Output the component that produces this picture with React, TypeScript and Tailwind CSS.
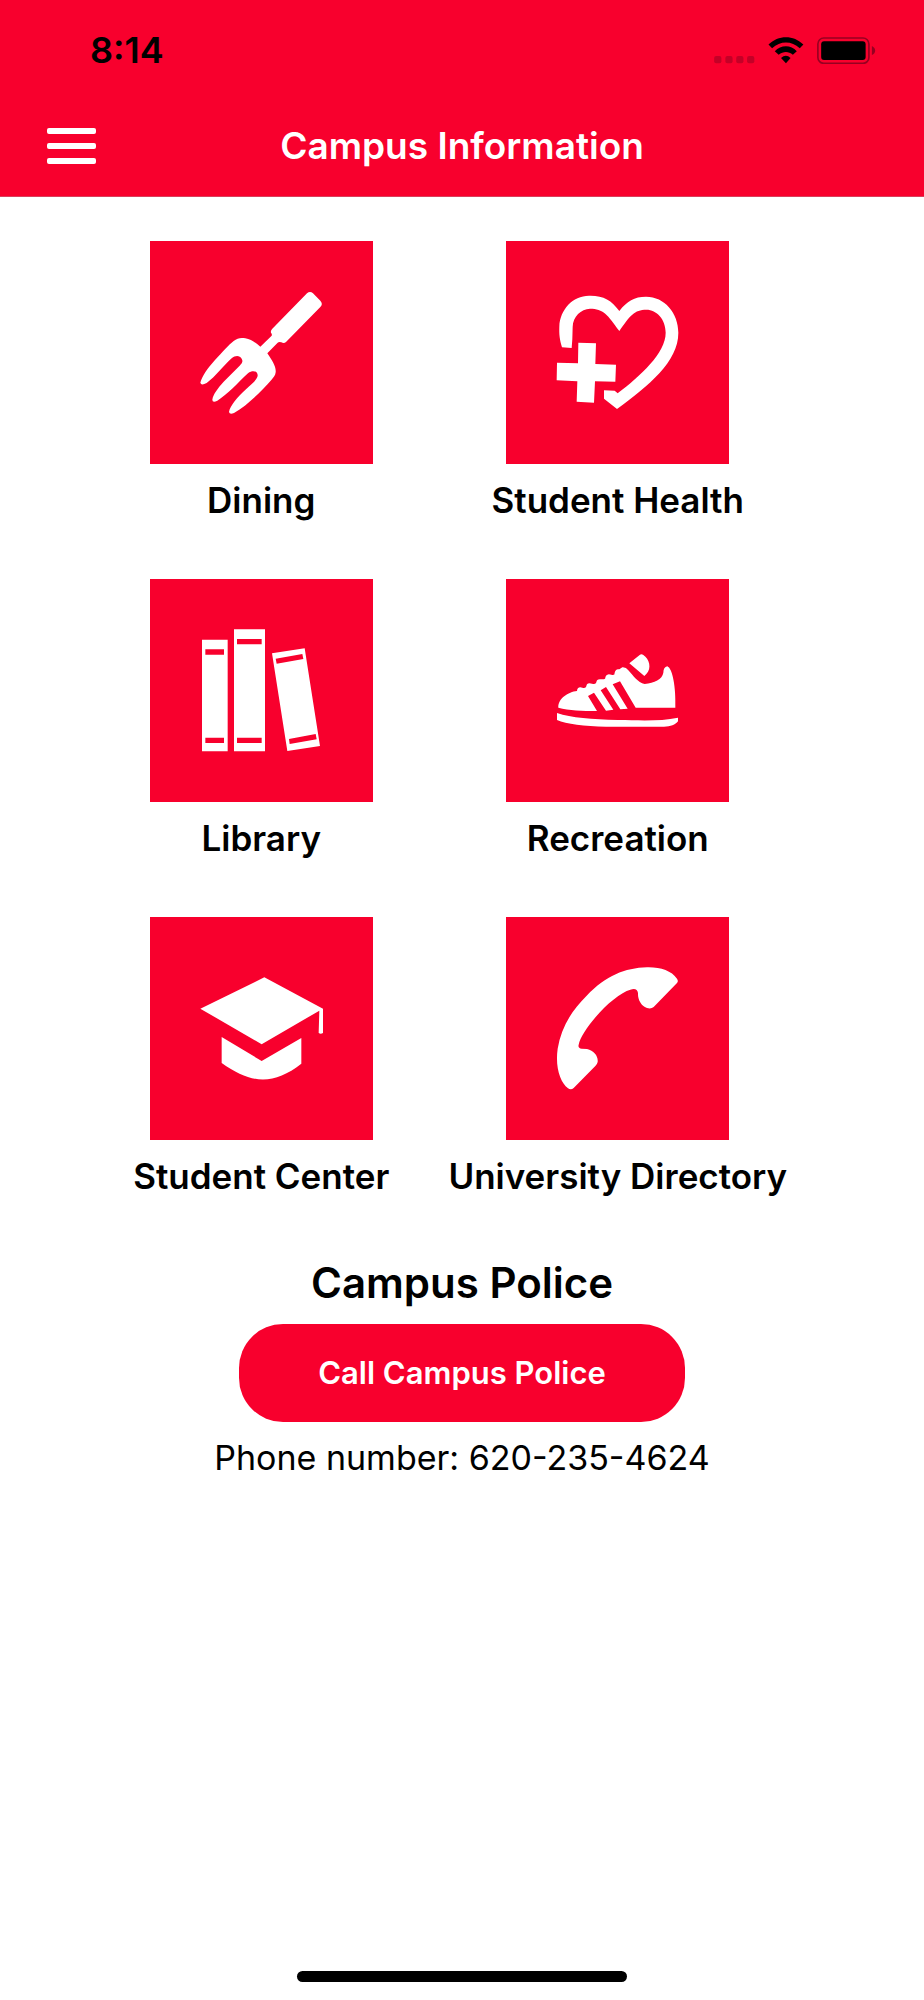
import type { ReactNode } from "react";

type Destination = {
  label: string;
  href: string;
  viewBox: string;
  icon: ReactNode;
};

const destinations: Destination[] = [
  {
    label: "Dining",
    href: "#dining",
    viewBox: "-120 -117 669 669",
    icon: (
      <path d="M351 40Q360 32 369 40L391 62Q400 72 391 81L288 186Q282 191 274 187Q267 184 263 188L232 220C247 242 259 261 257 277C256 287 251 292 244 300C212 336 172 376 132 399Q119 405 117 396C120 378 142 352 168 328C187 310 204 297 203 285C202 273 187 270 174 280C144 308 112 344 82 362Q67 369 67 359C70 342 83 325 101 305L149 257C158 249 159 243 155 236C149 226 136 226 125 235C99 259 77 289 50 309Q33 318 31 308C35 291 52 265 75 240C98 216 115 195 131 183C142 174 153 172 166 175C183 178 197 188 211 200L245 167Q247 163 243 158Q241 152 247 146Z" />
    ),
  },
  {
    label: "Student Health",
    href: "#student-health",
    viewBox: "78 4 669 669",
    icon: (
      <>
        <path d="M246 323C239 300 237 285 238 260C240 210 278 168 327 168C370 167 394 181 418 214C441 184 463 171 498 171C554 171 595 220 595 279C595 366 507 437 411 508L372 477V452L404 453L413 461C480 409 557 341 557 279C557 239 530 210 499 210C463 210 450 228 418 274C383 225 370 207 330 207C303 208 279 230 278 262L277 298L275 325Z" />
        <path d="M295 309L348 311L346 373L408 375L406 426L345 425L342 489L290 486L292 425L230 422L231 369L294 371Z" />
      </>
    ),
  },
  {
    label: "Library",
    href: "#library",
    viewBox: "3 12 669 669",
    icon: (
      <path
        fillRule="evenodd"
        d="M159 194H236V529H159ZM169 223V239H225V223ZM169 488V504H225V488ZM255 163H348V529H255ZM264 192V208H338V192ZM264 488V504H338V488ZM369 235L467 220L513 513L415 528ZM380 251L383 266L463 252L460 237ZM420 492L422 507L503 493L500 477Z"
      />
    ),
  },
  {
    label: "Recreation",
    href: "#recreation",
    viewBox: "18 12 669 669",
    icon: (
      <>
        <path d="M388 265L419 240Q424 236 430 240C448 251 456 280 439 297L433 303Z" />
        <path
          fillRule="evenodd"
          d="M175 398C174 370 205 351 231 348Q232 334 247 338Q257 341 259 334Q260 321 276 326Q287 330 289 322Q290 310 305 313Q318 314 316 306Q320 294 334 299Q345 302 344 293Q347 280 358 283L367 277Q378 276 385 286C399 301 413 323 434 327C463 324 487 313 490 293Q490 277 502 274C518 281 528 337 526 398H407L360 319L338 328L383 401L361 403L318 336L302 346L340 404L318 407L282 353L264 363L291 408C247 408 207 406 175 398Z"
        />
        <path d="M171 414C214 429 276 433 353 435C425 436 483 439 534 428V439C526 449 512 455 492 455H318C253 454 199 447 171 435Z" />
      </>
    ),
  },
  {
    label: "Student Center",
    href: "#student-center",
    viewBox: "59 20 669 669",
    icon: (
      <>
        <path d="M402 201L578 295V368Q571 372 565 368L567 301L394 402L210 295Z" />
        <path d="M274 380L394 452L513 383V460C431 523 366 524 274 458Z" />
      </>
    ),
  },
  {
    label: "University Directory",
    href: "#university-directory",
    viewBox: "198 20 669 669",
    icon: (
      <path d="M711 205Q716 212 711 218L641 290Q633 297 621 293C602 286 593 266 594 248Q591 231 571 238C535 248 473 303 432 367Q418 389 416 403Q413 413 425 415L441 416C462 420 475 438 473 455Q471 463 466 467L401 533Q393 540 384 534C361 516 345 471 353 415C363 356 391 304 440 256C499 196 554 173 621 171C661 170 694 181 711 205Z" />
    ),
  },
];

function StatusIcons() {
  return (
    <svg
      viewBox="67 50 490 82"
      className="h-[27px] w-[163px]"
      role="img"
      aria-label="No cellular signal, Wi-Fi connected, battery full"
    >
      <g fill="#c40027">
        <rect x="68" y="108" width="22" height="22" rx="6" />
        <rect x="102" y="108" width="22" height="22" rx="6" />
        <rect x="135" y="108" width="22" height="22" rx="6" />
        <rect x="168" y="108" width="22" height="22" rx="6" />
      </g>
      <path d="M233 73C262 43 310 43 339 73L328 84C303 61 269 61 244 84Z" />
      <path d="M252 93C271 73 301 73 319 93L307 104C294 93 278 93 264 104Z" />
      <path d="M271 114Q286 100 300 114L286 130Z" />
      <rect x="383" y="53" width="155" height="77" rx="18" fill="none" stroke="#960021" strokeWidth="5" />
      <rect x="393" y="63" width="135" height="57" rx="9" />
      <path d="M547 77Q557 82 557 91T547 105Z" fill="#960021" />
    </svg>
  );
}

export default function App() {
  return (
    <div className="flex min-h-screen flex-col bg-white font-['Inter',sans-serif] text-black">
      <header className="border-b border-[#d8405c] bg-[#f8002d]">
        <div className="flex h-[100px] items-center justify-between pr-12 pl-[90px]">
          <time className="text-[36px] leading-10 font-semibold">8:14</time>
          <StatusIcons />
        </div>
        <div className="grid h-24 grid-cols-[1fr_auto_1fr] items-center px-[47px] pb-1 text-white">
          <button type="button" aria-label="Open menu" className="flex w-[49px] flex-col gap-[9px]">
            <span className="h-[6px] rounded-[2px] bg-white" />
            <span className="h-[6px] rounded-[2px] bg-white" />
            <span className="h-[6px] rounded-[2px] bg-white" />
          </button>
          <h1 className="text-[37px] leading-10 font-semibold">Campus Information</h1>
        </div>
      </header>

      <main className="flex-1 pt-11">
        <nav aria-label="Campus services" className="grid grid-cols-2 gap-y-[59px] pr-32 pl-[83px]">
          {destinations.map((item) => (
            <a key={item.label} href={item.href} className="flex flex-col items-center gap-4">
              <svg viewBox={item.viewBox} className="size-[223px] bg-[#f8002d] fill-white" aria-hidden="true">
                {item.icon}
              </svg>
              <span className="text-[35px] leading-10 font-semibold whitespace-nowrap">{item.label}</span>
            </a>
          ))}
        </nav>

        <section className="mt-[62px] flex flex-col items-center">
          <h2 className="text-[42px] leading-[50px] font-semibold">Campus Police</h2>
          <button
            type="button"
            className="mt-4 h-[98px] w-[446px] rounded-[44px] bg-[#f8002d] text-[31px] leading-10 font-semibold text-white"
          >
            Call Campus Police
          </button>
          <p className="mt-4 text-[34px] leading-10">Phone number: 620-235-4624</p>
        </section>
      </main>

      <div className="mx-auto mb-[18px] h-[11px] w-[330px] rounded-full bg-black" />
    </div>
  );
}
